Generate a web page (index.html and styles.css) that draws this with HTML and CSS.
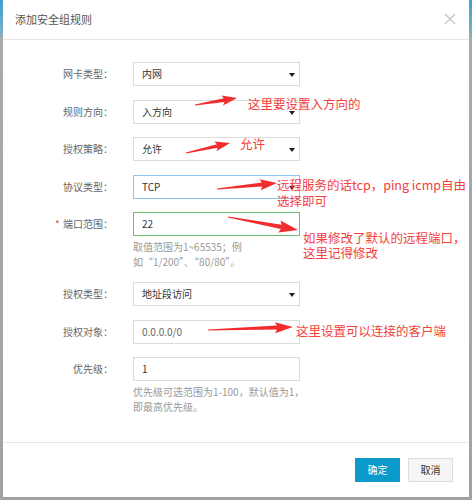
FILE: index.html
```html
<!DOCTYPE html>
<html lang="zh-CN">
<head>
<meta charset="utf-8">
<title>添加安全组规则</title>
<link rel="stylesheet" href="styles.css">
</head>
<body>
<div class="screen">
  <div class="dialog">
    <div class="dlg-head">
      <span class="title">添加安全组规则</span>
      <svg class="close" width="12" height="12" viewBox="0 0 12 12"><path d="M1 1 L11 11 M11 1 L1 11" stroke="#c4c4c4" stroke-width="1.2" fill="none"/></svg>
    </div>
    <div class="dlg-body">
      <div class="row">
        <div class="lbl">网卡类型：</div>
        <div class="ctrl"><div class="field select">内网<i class="caret"></i></div></div>
      </div>
      <div class="row">
        <div class="lbl">规则方向：</div>
        <div class="ctrl"><div class="field select">入方向<i class="caret"></i></div></div>
      </div>
      <div class="row">
        <div class="lbl">授权策略：</div>
        <div class="ctrl"><div class="field select">允许<i class="caret"></i></div></div>
      </div>
      <div class="row">
        <div class="lbl">协议类型：</div>
        <div class="ctrl"><div class="field select focus">TCP<i class="caret"></i></div></div>
      </div>
      <div class="row">
        <div class="lbl"><span class="req">*</span> 端口范围：</div>
        <div class="ctrl">
          <div class="field valid">22</div>
          <div class="help">取值范围为1~65535；例<br>如“1/200”、“80/80”。</div>
        </div>
      </div>
      <div class="row">
        <div class="lbl">授权类型：</div>
        <div class="ctrl"><div class="field select">地址段访问<i class="caret"></i></div></div>
      </div>
      <div class="row">
        <div class="lbl">授权对象：</div>
        <div class="ctrl"><div class="field muted">0.0.0.0/0</div></div>
      </div>
      <div class="row">
        <div class="lbl">优先级：</div>
        <div class="ctrl">
          <div class="field">1</div>
          <div class="help">优先级可选范围为1-100，默认值为1，<br>即最高优先级。</div>
        </div>
      </div>
    </div>
    <div class="dlg-foot">
      <button class="btn primary">确定</button>
      <button class="btn">取消</button>
    </div>
  </div>

  <svg class="arrows" width="472" height="500" viewBox="0 0 472 500">
    <g fill="#f22c2c">
      <g transform="translate(195,105) rotate(-9.46)"><polygon points="0,-0.5 29.6,-1.8 27.6,-5 42.6,0 27.6,5 29.6,1.8 0,0.5"/></g>
      <g transform="translate(186,153) rotate(-12.8)"><polygon points="0,-0.5 32.1,-1.8 30.1,-5 45.1,0 30.1,5 32.1,1.8 0,0.5"/></g>
      <g transform="translate(217,189) rotate(-5.7)"><polygon points="0,-0.5 45.3,-2 43.3,-5.5 60.3,0 43.3,5.5 45.3,2 0,0.5"/></g>
      <g transform="translate(228,217) rotate(10.5)"><polygon points="0,-0.5 54.2,-2.2 52.2,-6 71.2,0 52.2,6 54.2,2.2 0,0.5"/></g>
      <g transform="translate(208,330) rotate(-2)"><polygon points="0,-0.5 69,-2 67,-5.5 85,0 67,5.5 69,2 0,0.5"/></g>
    </g>
  </svg>
  <div class="note n1">这里要设置入方向的</div>
  <div class="note n2">允许</div>
  <div class="note n3">远程服务的话tcp，ping icmp自由<br>选择即可</div>
  <div class="note n4">如果修改了默认的远程端口，<br>这里记得修改</div>
  <div class="note n5">这里设置可以连接的客户端</div>
</div>
</body>
</html>
```

FILE: styles.css
```css
* { box-sizing: border-box; }
html, body { margin: 0; padding: 0; }
body {
  font-family: "Noto Sans CJK SC", "Noto Sans", sans-serif;
  background: #a4a4a4;
}
.screen {
  position: relative;
  width: 472px;
  height: 500px;
  overflow: hidden;
  background: linear-gradient(to bottom, #3f9fc9 0, #6fb0cc 28px, #a9a9a9 40px, #a2a2a2 100%);
}
.dialog {
  margin-left: 3px;
  width: 466px;
  height: 497px;
  background: #fff;
  display: flex;
  flex-direction: column;
}
.dlg-head {
  height: 40px;
  border-bottom: 1px solid #e6e6e6;
  display: flex;
  align-items: center;
  justify-content: space-between;
  padding: 0 13px 1px 12px;
}
.title {
  font-size: 11px;
  color: #555;
}
.close { display: block; }
.dlg-body {
  height: 402px;
  padding-top: 22px;
}
.row {
  display: flex;
  align-items: flex-start;
  margin-bottom: 13.5px;
}
.lbl {
  width: 110px;
  margin-right: 20px;
  text-align: right;
  font-size: 10px;
  line-height: 24px;
  color: #666;
  white-space: nowrap;
}
.req { color: #e84c3d; margin-right: 1px; }
.ctrl { width: 170px; }
.field {
  position: relative;
  width: 167px;
  height: 24px;
  border: 1px solid #dcdcdc;
  background: #fff;
  padding: 0 8px;
  font-size: 10px;
  line-height: 22px;
  color: #333;
}
.field.focus { border-color: #8fc4ee; }
.field.valid { border-color: #6cc16c; }
.field.muted { color: #666; }
.caret {
  position: absolute;
  right: 4px;
  top: 10px;
  width: 0;
  height: 0;
  border-left: 3px solid transparent;
  border-right: 3px solid transparent;
  border-top: 4px solid #1e1e1e;
}
.help {
  margin-top: 2.5px;
  font-size: 10px;
  line-height: 15px;
  color: #999;
  white-space: nowrap;
}
.dlg-foot {
  height: 55px;
  border-top: 1px solid #e6e6e6;
  display: flex;
  justify-content: flex-end;
  align-items: flex-start;
  gap: 8px;
  padding: 15px 16px 0 0;
}
.btn {
  width: 45px;
  height: 24px;
  border: 1px solid #dcdcdc;
  background: #f5f5f5;
  color: #333;
  font-family: inherit;
  font-size: 10px;
  line-height: 22px;
  padding: 0;
  margin: 0;
}
.btn.primary {
  background: #0a9acb;
  border-color: #0a9acb;
  color: #fff;
}
.arrows {
  position: absolute;
  left: 0;
  top: 0;
}
.note {
  position: absolute;
  font-size: 12.5px;
  line-height: 15px;
  color: #f54040;
  white-space: nowrap;
}
.n1 { left: 248px; top: 95.5px; }
.n2 { left: 240px; top: 135.5px; }
.n3 { left: 277px; top: 177px; line-height: 16px; }
.n4 { left: 303px; top: 229.5px; }
.n5 { left: 296px; top: 322.5px; }
```
